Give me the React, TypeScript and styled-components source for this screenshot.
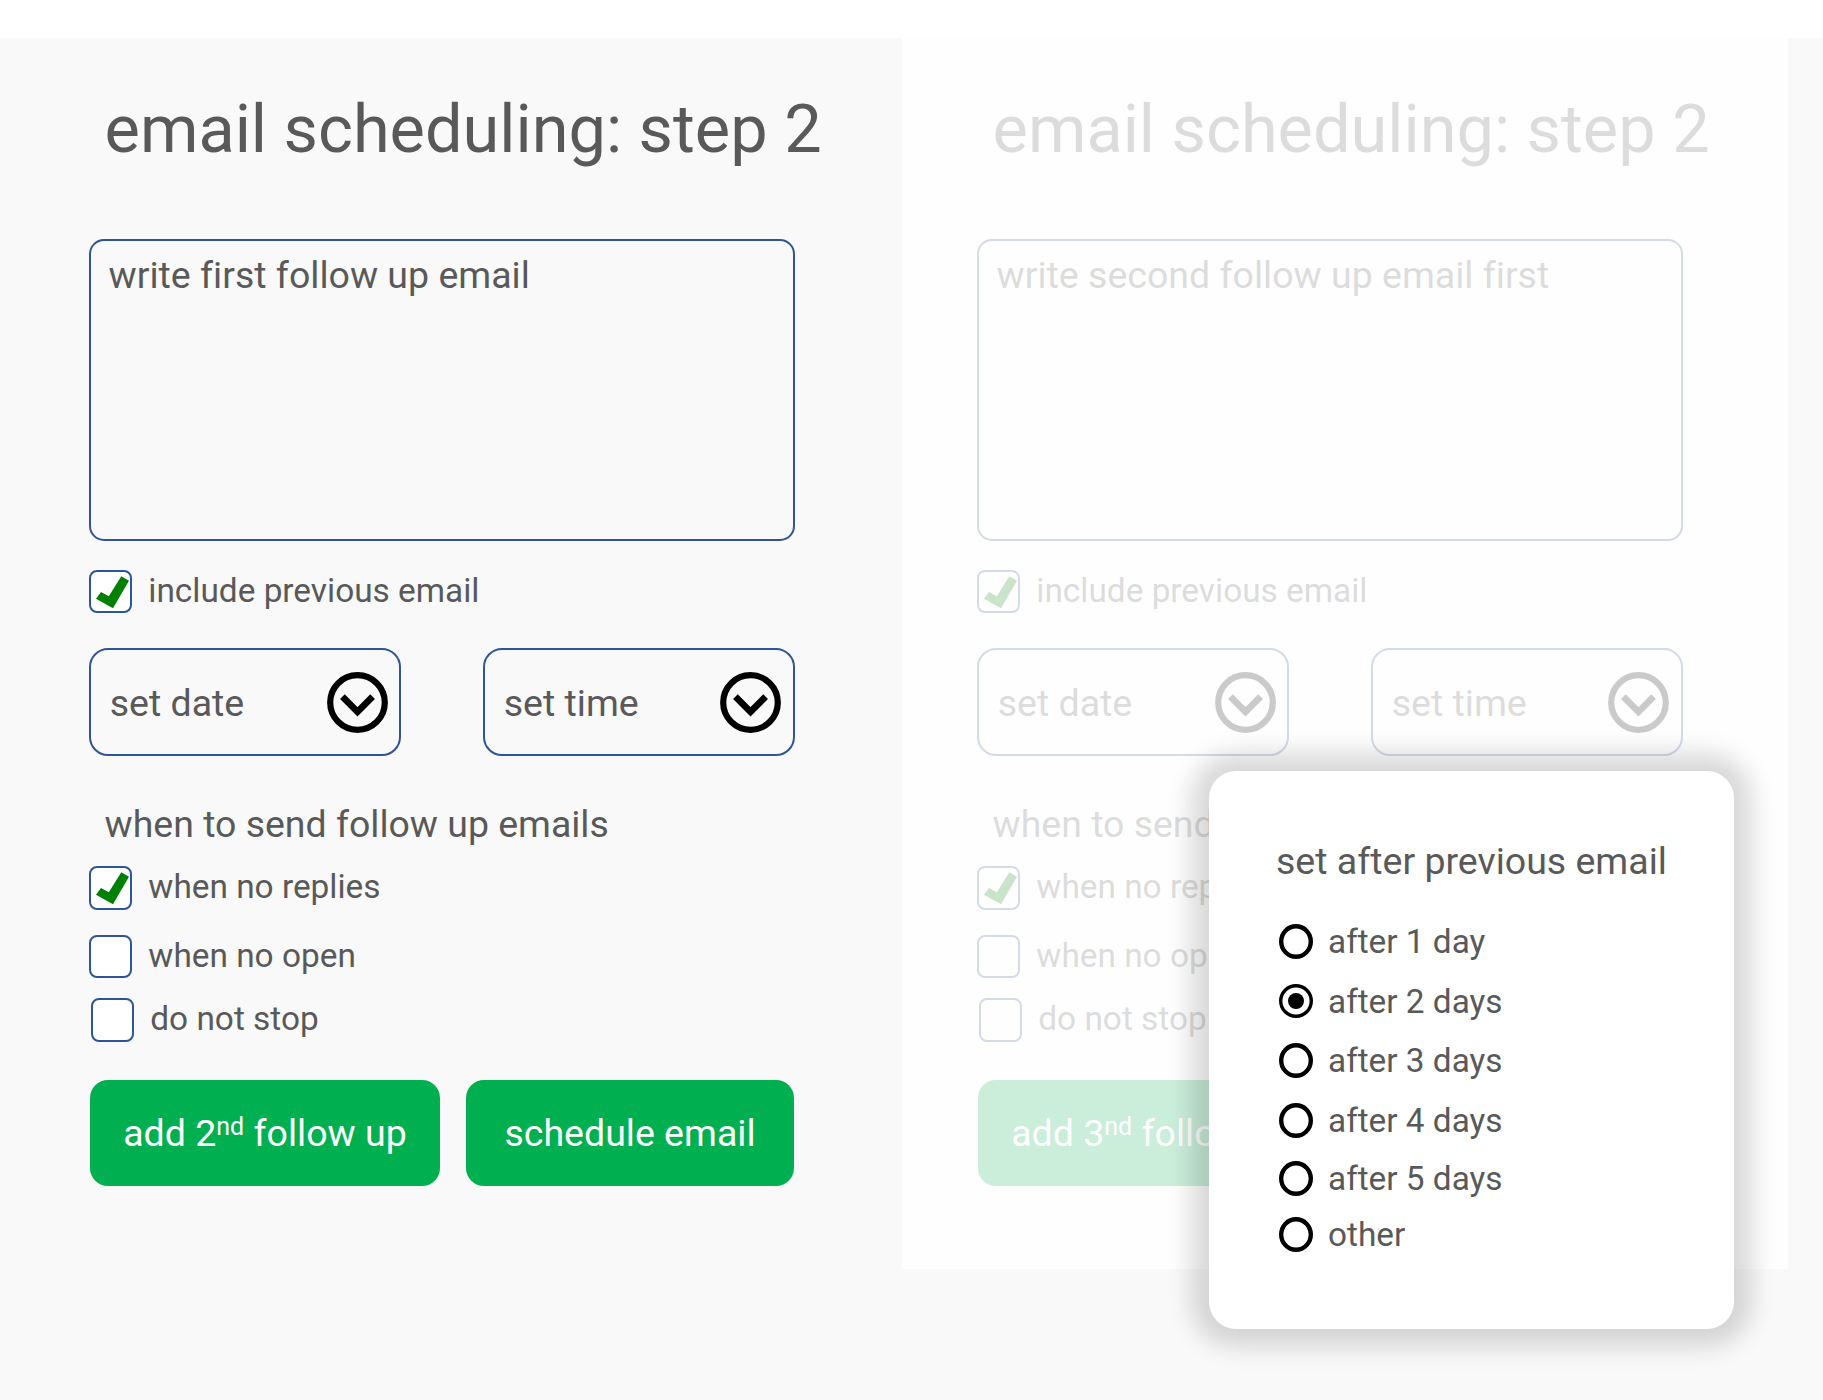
import React from 'react';
import styled, {createGlobalStyle} from 'styled-components';

const GlobalStyle = createGlobalStyle`
  * {
    box-sizing: border-box;
  }

  body {
    margin: 0;
    background: #f9f9f9;
    font-family: Roboto, 'Liberation Sans', sans-serif;
    font-variant-ligatures: none;
    color: #595959;
  }
`;

const PageStyle = styled.div`
  position: relative;
  width: 1823px;
  height: 1400px;
  overflow: hidden;
  border-top: 38px solid #ffffff;
  background: #f9f9f9;
`;

const ColumnsStyle = styled.main`
  display: flex;
  align-items: flex-start;
`;

const PanelStyle = styled.section<{$faded?: boolean}>`
  width: ${props => (props.$faded ? 886 : 902)}px;
  height: 1231px;
  padding-left: ${props => (props.$faded ? 75 : 89)}px;
  background: ${props => (props.$faded ? '#fefefe' : 'transparent')};
`;

const FormStyle = styled.div<{$faded?: boolean}>`
  display: flex;
  flex-direction: column;
  width: 706px;
  padding-top: 51px;
  opacity: ${props => (props.$faded ? 0.2 : 1)};
`;

const TitleStyle = styled.h1`
  margin: 0 0 70px 15.6px;
  font-weight: 400;
  font-size: 66.67px;
  line-height: 80px;
  white-space: nowrap;
`;

const MessageStyle = styled.div`
  height: 302px;
  padding: 11px 17.6px;
  border: 2px solid #2f5597;
  border-radius: 15px;
  font-size: 37.5px;
  line-height: 46px;
  white-space: nowrap;
`;

const CheckRowStyle = styled.label<{$top: number; $indent?: number}>`
  display: flex;
  gap: 16.3px;
  margin-top: ${props => props.$top}px;
  margin-left: ${props => props.$indent || 0}px;
`;

const BoxStyle = styled.span<{$tall?: boolean}>`
  display: flex;
  width: 43px;
  height: ${props => (props.$tall ? 44 : 43)}px;
  border: 2px solid #2f5597;
  border-radius: 8px;
  background: #ffffff;
`;

const CheckTextStyle = styled.span`
  font-size: 33.38px;
  line-height: 41px;
  white-space: nowrap;
`;

const SelectRowStyle = styled.div`
  display: flex;
  justify-content: space-between;
  margin-top: 35px;
`;

const SelectStyle = styled.div<{$right: number}>`
  display: flex;
  align-items: center;
  justify-content: space-between;
  width: 312px;
  height: 108px;
  padding: 0 ${props => props.$right}px 0 18.7px;
  border: 2px solid #2f5597;
  border-radius: 19px;
  font-size: 37.5px;
  line-height: 44px;
`;

const SelectTextStyle = styled.span`
  padding-top: 2px;
`;

const SectionTitleStyle = styled.h2`
  margin: 46px 0 0 15.6px;
  font-weight: 400;
  font-size: 37.45px;
  line-height: 44px;
  white-space: nowrap;
`;

const ButtonRowStyle = styled.div`
  display: flex;
  justify-content: space-between;
  margin: 38px 1px 0;
`;

const ButtonStyle = styled.button<{$width: number}>`
  width: ${props => props.$width}px;
  height: 106px;
  padding: 0;
  border: none;
  border-radius: 18px;
  background: #00b050;
  color: #ffffff;
  font-family: inherit;
  font-variant-ligatures: none;
  font-size: 37.5px;
  line-height: 44px;
  white-space: nowrap;

  sup {
    position: relative;
    top: -11px;
    font-size: 25px;
    line-height: 0;
    vertical-align: baseline;
  }
`;

// Popover that lies over the faded panel
const PopupStyle = styled.aside`
  position: absolute;
  left: 1209px;
  top: 733px;
  width: 525px;
  height: 558px;
  padding: 68px 0 0 67px;
  border-radius: 27px;
  background: #ffffff;
  box-shadow: 0 0 24px 18px rgba(0, 0, 0, 0.15);
`;

const PopupTitleStyle = styled.h2`
  margin: 0;
  font-weight: 400;
  font-size: 37.5px;
  line-height: 44px;
  white-space: nowrap;
`;

const OptionStyle = styled.label<{$top: number}>`
  display: flex;
  gap: 15px;
  height: 35px;
  margin: ${props => props.$top}px 0 0 3px;
  font-size: 33.35px;
  line-height: 35px;
  white-space: nowrap;
`;

const RadioStyle = styled.span<{$checked: boolean}>`
  display: flex;
  align-items: center;
  justify-content: center;
  width: 34px;
  height: ${props => (props.$checked ? 34 : 35)}px;
  border-radius: 50%;
  box-shadow: inset 0 0 0 ${props => (props.$checked ? 3.4 : 4.4)}px #000000;
`;

const DotStyle = styled.span`
  width: 16px;
  height: 16px;
  border-radius: 50%;
  background: #000000;
`;

const Tick = () => (
  <svg width="39" height="39" viewBox="0 0 39 39">
    <path
      d="M5 26.8 L10 20 L17.8 24.2 L30.3 4.2 L38 8.8 L22 36.2 Z"
      fill="#008000"
    />
  </svg>
);

const ArrowIcon = () => (
  <svg width="61" height="61" viewBox="0 0 61 61">
    <circle cx="30.5" cy="30.5" r="27.3" fill="none" stroke="#000" strokeWidth="6.2" />
    <path d="M15.4 24.6 L30.5 39.8 L45.6 24.6" fill="none" stroke="#000" strokeWidth="6.6" />
  </svg>
);

interface CheckRowProps {
  label: string;
  top: number;
  checked?: boolean;
  tall?: boolean;
  indent?: number;
}

function CheckRow({label, top, checked, tall, indent}: CheckRowProps) {
  return (
    <CheckRowStyle $top={top} $indent={indent}>
      <BoxStyle $tall={tall}>{checked && <Tick />}</BoxStyle>
      <CheckTextStyle>{label}</CheckTextStyle>
    </CheckRowStyle>
  );
}

interface FollowUpPanelProps {
  message: string;
  next: string;
  faded?: boolean;
}

function FollowUpPanel({message, next, faded}: FollowUpPanelProps) {
  return (
    <PanelStyle $faded={faded}>
      <FormStyle $faded={faded}>
        <TitleStyle>email scheduling: step 2</TitleStyle>
        <MessageStyle>{message}</MessageStyle>
        <CheckRow label="include previous email" top={29} checked />
        <SelectRowStyle>
          <SelectStyle $right={11}>
            <SelectTextStyle>set date</SelectTextStyle>
            <ArrowIcon />
          </SelectStyle>
          <SelectStyle $right={12}>
            <SelectTextStyle>set time</SelectTextStyle>
            <ArrowIcon />
          </SelectStyle>
        </SelectRowStyle>
        <SectionTitleStyle>when to send follow up emails</SectionTitleStyle>
        <CheckRow label="when no replies" top={20} checked tall />
        <CheckRow label="when no open" top={25} />
        <CheckRow label="do not stop" top={20} tall indent={2} />
        <ButtonRowStyle>
          <ButtonStyle $width={350}>
            add {next}
            <sup>nd</sup> follow up
          </ButtonStyle>
          <ButtonStyle $width={328}>schedule email</ButtonStyle>
        </ButtonRowStyle>
      </FormStyle>
    </PanelStyle>
  );
}

const options = [
  {label: 'after 1 day', top: 41},
  {label: 'after 2 days', top: 25},
  {label: 'after 3 days', top: 24},
  {label: 'after 4 days', top: 25},
  {label: 'after 5 days', top: 23},
  {label: 'other', top: 21},
];

export default function App(): JSX.Element {
  const selected = 'after 2 days';
  return (
    <PageStyle>
      <GlobalStyle />
      <ColumnsStyle>
        <FollowUpPanel message="write first follow up email" next="2" />
        <FollowUpPanel message="write second follow up email first" next="3" faded />
      </ColumnsStyle>
      <PopupStyle>
        <PopupTitleStyle>set after previous email</PopupTitleStyle>
        {options.map(({label, top}) => (
          <OptionStyle key={label} $top={top}>
            <RadioStyle $checked={label === selected}>
              {label === selected && <DotStyle />}
            </RadioStyle>
            {label}
          </OptionStyle>
        ))}
      </PopupStyle>
    </PageStyle>
  );
}
